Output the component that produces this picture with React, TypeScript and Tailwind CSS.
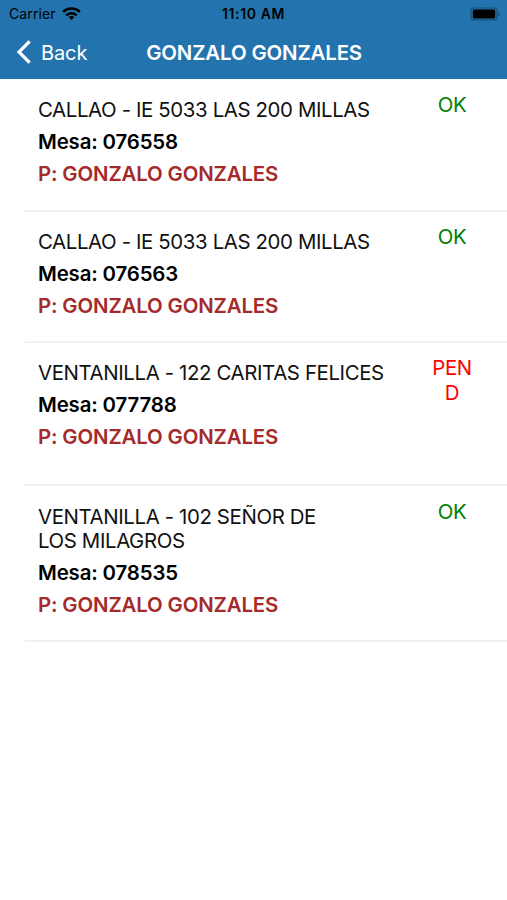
import React from 'react';

const mesas = [
  { local: 'CALLAO - IE 5033 LAS 200 MILLAS', mesa: '076558', estado: 'OK', row: 'h-[133px] pt-[19px]' },
  { local: 'CALLAO - IE 5033 LAS 200 MILLAS', mesa: '076563', estado: 'OK', row: 'h-[131px] pt-[18px]' },
  { local: 'VENTANILLA - 122 CARITAS FELICES', mesa: '077788', estado: 'PEND', row: 'h-[143px] pt-[18px]' },
  { local: 'VENTANILLA - 102 SEÑOR DE\nLOS MILAGROS', mesa: '078535', estado: 'OK', row: 'h-[156px] pt-[18.5px]' },
];

const StatusBar = () => {
  return <div className="h-[27px] pl-[9px] pr-[6px] flex items-center justify-between text-black">
      <div className="w-24 flex items-center gap-[6px]">
        <span className="text-[14px] leading-7 tracking-[0.12px]">Carrier</span>
        <svg width="19" height="14" viewBox="0 0 19 14" fill="none" stroke="currentColor" strokeWidth="2.5">
          <path d="M1.1 4.8C5.8 0.4 13.2 0.4 17.9 4.8" />
          <path d="M4.2 8.3C7.2 5.5 11.8 5.5 14.8 8.3" />
          <path d="M9.5 13L6.6 10.1C8.3 8.6 10.7 8.6 12.4 10.1Z" fill="currentColor" stroke="none" />
        </svg>
      </div>
      <span className="mr-[3px] text-[14px] leading-7 font-semibold tracking-[0.6px]">11:10 AM</span>
      <div className="w-24 flex justify-end">
        <svg width="31" height="14" viewBox="0 0 31 14">
          <rect x="1" y="1" width="26" height="12" rx="3.5" fill="none" stroke="#000000" strokeOpacity="0.35" strokeWidth="1.2" />
          <rect x="2.8" y="2.6" width="22.4" height="8.8" rx="1.5" fill="#000000" />
          <path d="M28.5 5V9C30 8.4 30 5.6 28.5 5Z" fill="#000000" fillOpacity="0.4" />
        </svg>
      </div>
    </div>;
};

const NavBar = () => {
  return <div className="h-[52px] pl-4 pr-[145px] flex items-center justify-between text-white">
      <button className="flex items-center gap-[9px] text-[20px] leading-6 tracking-[-0.1px]">
        <svg className="-mt-[2px]" width="16" height="24" viewBox="0 0 16 24" fill="none" stroke="currentColor" strokeWidth="3.2">
          <path d="M13.6 1.3L3 12L13.6 22.7" />
        </svg>
        Back
      </button>
      <h1 className="text-[20.4px] leading-6 font-semibold tracking-[-0.14px] whitespace-nowrap">GONZALO GONZALES</h1>
    </div>;
};

export default function App() {
  return <div className="w-full h-[900px] bg-white overflow-hidden font-[Inter,'Liberation_Sans',sans-serif]">
      <header className="bg-[#2374ae]">
        <StatusBar />
        <NavBar />
      </header>
      <ul className="pl-[25px]">
        {mesas.map(item => <li key={item.mesa} className={`${item.row} pl-[13px] pr-[34px] flex items-start justify-between border-b-2 border-[#f1f1f1] text-[20.4px] leading-[24.5px]`}>
            <div className="w-[350px]">
              <p className="tracking-[-0.38px] whitespace-pre-line text-[#111111]">{item.local}</p>
              <p className="mt-[7.5px] font-semibold tracking-[-0.14px] text-black">Mesa: {item.mesa}</p>
              <p className="mt-[7.5px] font-semibold tracking-[-0.14px] text-[#a52a2a]">P: GONZALO GONZALES</p>
            </div>
            <div className={`w-[42px] -mt-[5px] text-center tracking-[-0.4px] break-all ${item.estado === 'OK' ? 'text-[#008000]' : 'text-[#ff0000]'}`}>
              {item.estado}
            </div>
          </li>)}
      </ul>
    </div>;
}
